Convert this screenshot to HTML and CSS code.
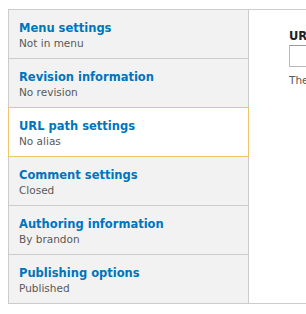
FILE: index.html
```html
<!DOCTYPE html>
<html lang="en">
<head>
  <meta charset="UTF-8">
  <meta name="viewport" content="width=device-width, initial-scale=1.0">
  <title>Vertical tabs</title>
  <link rel="stylesheet" href="styles.css">
</head>
<body>
  <div class="vertical-tabs">
    <ul class="tabs-menu">
      <li class="tab-item">
        <a href="#">
          <strong class="tab-title">Menu settings</strong>
          <span class="tab-summary">Not in menu</span>
        </a>
      </li>
      <li class="tab-item">
        <a href="#">
          <strong class="tab-title">Revision information</strong>
          <span class="tab-summary">No revision</span>
        </a>
      </li>
      <li class="tab-item is-selected">
        <a href="#">
          <strong class="tab-title">URL path settings</strong>
          <span class="tab-summary">No alias</span>
        </a>
      </li>
      <li class="tab-item">
        <a href="#">
          <strong class="tab-title">Comment settings</strong>
          <span class="tab-summary">Closed</span>
        </a>
      </li>
      <li class="tab-item">
        <a href="#">
          <strong class="tab-title">Authoring information</strong>
          <span class="tab-summary">By brandon</span>
        </a>
      </li>
      <li class="tab-item">
        <a href="#">
          <strong class="tab-title">Publishing options</strong>
          <span class="tab-summary">Published</span>
        </a>
      </li>
    </ul>
    <div class="tabs-pane">
      <label class="form-label" for="alias">URL alias</label>
      <input class="form-text" id="alias" type="text">
      <div class="description">The alternative URL for this content.</div>
    </div>
  </div>
</body>
</html>
```
FILE: styles.css
```css
body {
  margin: 0;
  padding: 9px 0 0 8px;
  font-family: "DejaVu Sans", Verdana, sans-serif;
  overflow: hidden;
}

.vertical-tabs {
  display: flex;
  width: 400px;
  border-top: 1px solid #ccc;
  border-bottom: 1px solid #ccc;
  border-left: 1px solid #ccc;
  background: #fff;
}

.tabs-menu {
  list-style: none;
  margin: 0;
  padding: 0;
  width: 239px;
  flex: none;
  background: #f2f2f2;
  border-right: 1px solid #ccc;
}

.tab-item {
  border-top: 1px solid #ccc;
  height: 49px;
  box-sizing: border-box;
}

.tab-item:first-child {
  border-top: none;
  height: 48px;
}

.tab-item a {
  display: block;
  height: 100%;
  box-sizing: border-box;
  padding: 10px 10px 0 10px;
  text-decoration: none;
}

.tab-title {
  display: block;
  font-size: 11.5px;
  line-height: 16px;
  color: #0074bd;
}

.tab-summary {
  display: block;
  font-size: 10.5px;
  line-height: 14px;
  color: #595959;
}

.tab-item.is-selected {
  position: relative;
  background: #fff;
  margin: 0 -1px -1px -1px;
  border: 1px solid #f0c36d;
  height: 50px;
}

.tabs-pane {
  padding: 18px 0 0 40px;
  flex: 1;
  white-space: nowrap;
}

.form-label {
  display: block;
  font-size: 11.5px;
  font-weight: bold;
  line-height: 16px;
  color: #222;
  margin-bottom: 1px;
}

.form-text {
  display: block;
  width: 300px;
  height: 22px;
  box-sizing: border-box;
  margin: 0;
  border: 1px solid #b8b8b8;
  border-top-color: #999;
  background: #fff;
}

.description {
  font-size: 10.5px;
  line-height: 14px;
  color: #595959;
  margin-top: 6px;
}
```
